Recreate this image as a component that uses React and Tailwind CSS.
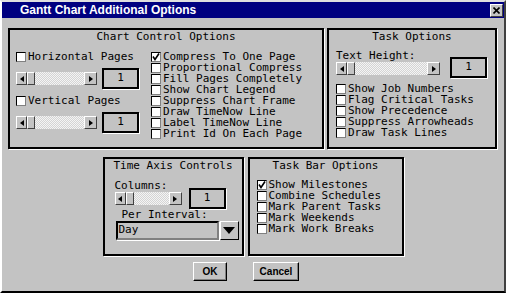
const mono = { fontFamily: '"DejaVu Sans Mono", "Liberation Mono", monospace' }

function Check({ checked }) {
  return (
    <span className="w-[10px] h-[10px] shrink-0 bg-white border border-t-black border-l-black border-r-[#808080] border-b-[#808080] flex items-center justify-center">
      {checked && (
        <svg width="8" height="8" viewBox="0 0 8 8">
          <path d="M1 3.5 L3 6.5 L7 0.5" stroke="black" strokeWidth="1.6" fill="none" />
        </svg>
      )}
    </span>
  )
}

function Row({ label, checked }) {
  return (
    <div className="flex items-center gap-[2px] h-[11px] leading-[11px] whitespace-nowrap">
      <Check checked={checked} />
      <span>{label}</span>
    </div>
  )
}

function Arrow({ dir, w }) {
  return (
    <span
      className={`h-full shrink-0 bg-[#c3c3c3] border border-t-white border-l-white border-r-[#404040] border-b-[#404040] flex items-center justify-center ${w}`}
    >
      <svg width="4" height="6" viewBox="0 0 4 6">
        {dir === 'left' ? <path d="M4 0 L0 3 L4 6 Z" fill="black" /> : <path d="M0 0 L4 3 L0 6 Z" fill="black" />}
      </svg>
    </span>
  )
}

function Scroll({ width }) {
  return (
    <div className={`flex h-[13px] ${width}`}>
      <Arrow dir="left" w="w-[11px]" />
      <span className="w-[8px] h-full shrink-0 bg-[#c3c3c3] border border-t-white border-l-white border-r-[#404040] border-b-[#404040]" />
      <span className="flex-1 h-full bg-[repeating-conic-gradient(#f4f4f4_0_25%,#d4d4d4_0_50%)] bg-[length:2px_2px]" />
      <Arrow dir="right" w="w-[13px]" />
    </div>
  )
}

function ValueBox({ className = '' }) {
  return (
    <div
      className={`w-[37px] h-[21px] shrink-0 border-2 border-black shadow-[1px_1px_0_#fff] flex items-center justify-center text-[11px] ${className}`}
    >
      1
    </div>
  )
}

function Group({ title, className, children }) {
  return (
    <div className={`border-2 border-black shadow-[1px_1px_0_#fff] ${className}`}>
      <div className="mt-[1px] h-[11px] leading-[11px] text-center">{title}</div>
      {children}
    </div>
  )
}

export default function App() {
  return (
    <div
      className="w-[506px] h-[293px] bg-[#c3c3c3] border-2 border-t-[#dfdfdf] border-l-white border-r-[#404040] border-b-black text-black overflow-hidden"
    >
      <div className="h-[16px] bg-[#000080] flex items-center justify-between pl-[18px] pr-[1px]">
        <span className="text-white font-bold text-[12px] leading-none" style={{ fontFamily: '"Liberation Sans", Arial, sans-serif' }}>
          Gantt Chart Additional Options
        </span>
        <span className="w-[13px] h-[13px] bg-[#c3c3c3] border border-t-white border-l-white border-r-[#404040] border-b-[#404040] flex items-center justify-center">
          <svg width="7" height="7" viewBox="0 0 7 7">
            <path d="M0.5 0.5 L6.5 6.5 M6.5 0.5 L0.5 6.5" stroke="black" strokeWidth="1.6" />
          </svg>
        </span>
      </div>

      <div className="text-[11px]" style={mono}>
        <div className="flex gap-[3px] pl-[6px] mt-[10px]">
          <Group title="Chart Control Options" className="w-[316px] h-[121px]">
            <div className="flex mt-[9px] pl-[6px]">
              <div className="w-[123px] flex flex-col">
                <Row label="Horizontal Pages" />
                <div className="flex items-center mt-[6px] h-[21px]">
                  <Scroll width="w-[81px]" />
                  <ValueBox className="ml-[5px]" />
                </div>
                <div className="mt-[6px]">
                  <Row label="Vertical Pages" />
                </div>
                <div className="flex items-center mt-[6px] h-[21px]">
                  <Scroll width="w-[81px]" />
                  <ValueBox className="ml-[5px]" />
                </div>
              </div>
              <div className="ml-[12px] flex flex-col">
                <Row label="Compress To One Page" checked />
                <Row label="Proportional Compress" />
                <Row label="Fill Pages Completely" />
                <Row label="Show Chart Legend" />
                <Row label="Suppress Chart Frame" />
                <Row label="Draw TimeNow Line" />
                <Row label="Label TimeNow Line" />
                <Row label="Print Id On Each Page" />
              </div>
            </div>
          </Group>

          <Group title="Task Options" className="w-[170px] h-[121px]">
            <div className="pl-[7px] mt-[8px]">
              <div className="flex items-start">
                <div className="flex flex-col">
                  <div className="h-[11px] leading-[11px]">Text Height:</div>
                  <div className="mt-[1px]">
                    <Scroll width="w-[104px]" />
                  </div>
                </div>
                <ValueBox className="ml-[10px] mt-[7px]" />
              </div>
              <div className="mt-[5px] flex flex-col">
                <Row label="Show Job Numbers" />
                <Row label="Flag Critical Tasks" />
                <Row label="Show Precedence" />
                <Row label="Suppress Arrowheads" />
                <Row label="Draw Task Lines" />
              </div>
            </div>
          </Group>
        </div>

        <div className="flex justify-center gap-[4px] mt-[8px]">
          <Group title="Time Axis Controls" className="w-[141px] h-[99px]">
            <div className="pl-[10px] mt-[9px]">
              <div className="flex items-start">
                <div className="flex flex-col">
                  <div className="h-[11px] leading-[11px]">Columns:</div>
                  <div className="mt-[1px]">
                    <Scroll width="w-[67px]" />
                  </div>
                </div>
                <ValueBox className="ml-[7px] mt-[8px]" />
              </div>
              <div className="h-[11px] leading-[11px] mt-0 ml-[7px]">Per Interval:</div>
              <div className="flex mt-[1px] h-[19px] ml-[1px]">
                <div className="w-[103px] h-full border-2 border-t-black border-l-black border-r-[#808080] border-b-[#808080] bg-[#c3c3c3] flex items-center pl-[1px] shadow-[1px_1px_0_#fff]">
                  Day
                </div>
                <div className="w-[19px] h-full ml-[1px] bg-[#c3c3c3] border border-t-white border-l-white border-r-black border-b-black flex items-center justify-center">
                  <svg width="12" height="7" viewBox="0 0 12 7">
                    <path d="M0 0 L12 0 L6 7 Z" fill="black" />
                  </svg>
                </div>
              </div>
            </div>
          </Group>

          <Group title="Task Bar Options" className="w-[156px] h-[99px]">
            <div className="pl-[7px] mt-[8px] flex flex-col">
              <Row label="Show Milestones" checked />
              <Row label="Combine Schedules" />
              <Row label="Mark Parent Tasks" />
              <Row label="Mark Weekends" />
              <Row label="Mark Work Breaks" />
            </div>
          </Group>
        </div>
      </div>

      <div className="flex gap-[26px] ml-[191px] mt-[6px]" style={{ fontFamily: '"Liberation Sans", Arial, sans-serif' }}>
        <button className="w-[34px] h-[19px] bg-[#c3c3c3] border border-t-white border-l-white border-r-black border-b-black shadow-[inset_-1px_-1px_0_#808080] text-[10px] font-bold">
          OK
        </button>
        <button className="w-[46px] h-[19px] bg-[#c3c3c3] border border-t-white border-l-white border-r-black border-b-black shadow-[inset_-1px_-1px_0_#808080] text-[10px] font-bold">
          Cancel
        </button>
      </div>
    </div>
  )
}
